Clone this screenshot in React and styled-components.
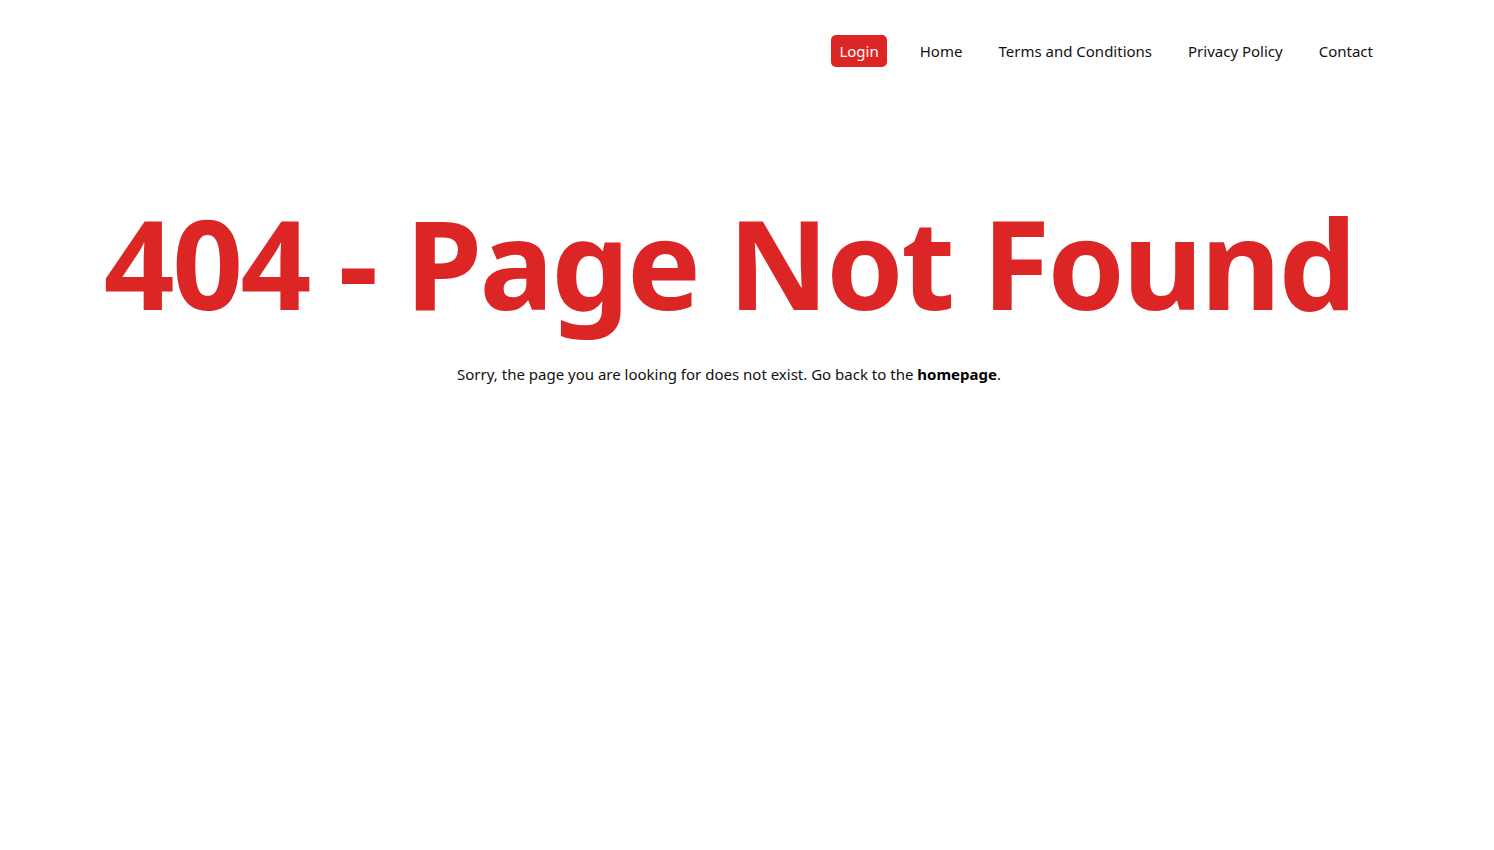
import React from "react";
import styled, { createGlobalStyle } from "styled-components";

const Global = createGlobalStyle`
  html, body { margin: 0; padding: 0; background: #fff; }
  body { font-family: "Noto Sans", "Open Sans", sans-serif; color: #111; }
`;

const Page = styled.div`
  min-height: 850px;
  display: flex;
  flex-direction: column;
`;

const Nav = styled.nav`
  display: flex;
  justify-content: flex-end;
  align-items: center;
  padding: 35px 121px 0 0;
  height: 32px;
`;

const NavList = styled.div`
  display: flex;
  align-items: center;
  gap: 36px;
`;

const NavLink = styled.a`
  font-size: 15px;
  line-height: 32px;
  color: #111;
  text-decoration: none;
  cursor: pointer;
  white-space: nowrap;
`;

const LoginButton = styled.a`
  display: inline-flex;
  align-items: center;
  height: 32px;
  padding: 0 8px;
  margin-right: -3px;
  border-radius: 5px;
  background: #dc2626;
  color: #fff;
  font-size: 15px;
  text-decoration: none;
  cursor: pointer;
`;

const Main = styled.main`
  display: flex;
  flex-direction: column;
  align-items: center;
  padding: 112px 36px 0 0;
`;

const Title = styled.h1`
  margin: 0;
  font-size: 124px;
  font-weight: 700;
  letter-spacing: -2.6px;
  line-height: 166px;
  color: #dc2626;
  white-space: nowrap;
`;

const Text = styled.p`
  margin: 17px 0 0;
  font-size: 15px;
  line-height: 24px;
  color: #111;
`;

const Strong = styled.a`
  font-weight: 700;
  color: #000;
  text-decoration: none;
`;

export default function App() {
  return (
    <Page>
      <Global />
      <Nav>
        <NavList>
          <LoginButton>Login</LoginButton>
          <NavLink>Home</NavLink>
          <NavLink>Terms and Conditions</NavLink>
          <NavLink>Privacy Policy</NavLink>
          <NavLink>Contact</NavLink>
        </NavList>
      </Nav>
      <Main>
        <Title>404 - Page Not Found</Title>
        <Text>
          Sorry, the page you are looking for does not exist. Go back to the{" "}
          <Strong>homepage</Strong>.
        </Text>
      </Main>
    </Page>
  );
}
